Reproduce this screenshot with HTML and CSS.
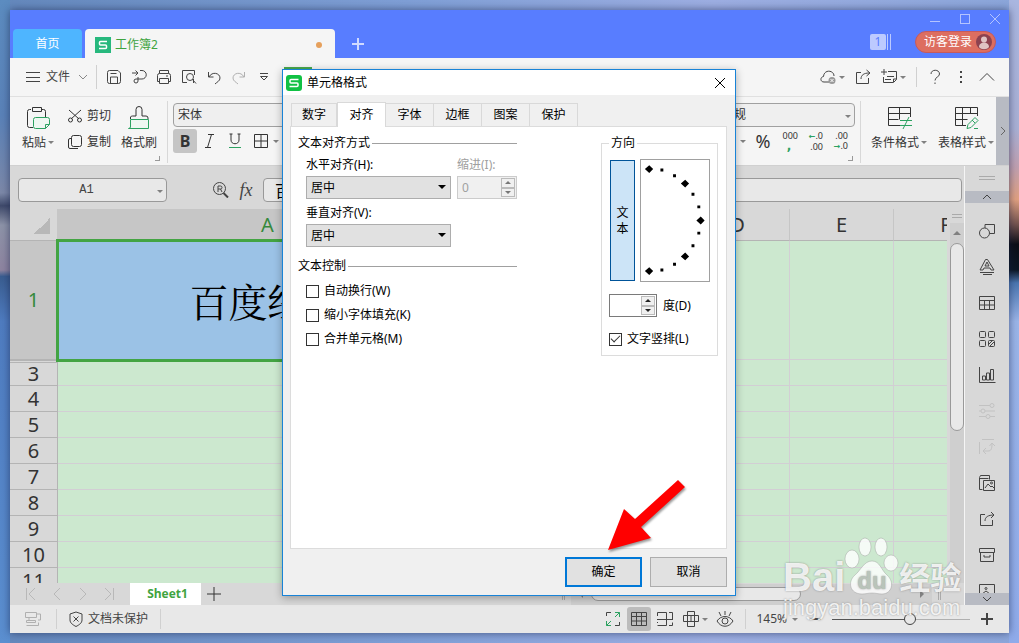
FILE: index.html
```html
<!DOCTYPE html>
<html lang="zh-CN">

<head>
    <meta charset="UTF-8">
    <meta name="viewport" content="width=device-width, initial-scale=1.0">
    <title>工作簿2</title>
    <link rel="stylesheet" href="styles.css">
</head>

<body>
    <div class="app">
        <!-- 标题栏 -->
        <header class="titlebar">
            <button class="home-tab">首页</button>
            <div class="book-tab">
                <svg class="logo" viewBox="0 0 16 16"><rect width="16" height="16" fill="#27b87d"/><path d="M12 4.500H5.500a1 1 0 0 0-1 1V7a1 1 0 0 0 1 1h5a1 1 0 0 1 1 1v1.500a1 1 0 0 1-1 1H4" stroke="#fff" stroke-width="1.500"/></svg>
                <span class="book-name">工作簿2</span>
                <span class="unsaved"></span>
            </div>
            <button class="new-tab" aria-label="新建"><svg viewBox="0 0 12 12"><path d="M6 0v12M0 6h12" stroke-width="2"/></svg></button>
            <div class="title-right">
                <div class="window-buttons">
                    <button aria-label="最小化"><svg viewBox="0 0 12 12"><path d="M1 8.500h10"/></svg></button>
                    <button aria-label="最大化"><svg viewBox="0 0 12 12"><rect x="1.500" y="1.500" width="9" height="9"/></svg></button>
                    <button aria-label="关闭"><svg viewBox="0 0 12 12"><path d="M1 1l10 10M11 1L1 11"/></svg></button>
                </div>
                <div class="account">
                    <span class="badge">1</span>
                    <span class="badge-lines"></span>
                    <button class="login">访客登录
                        <svg viewBox="0 0 16 16"><circle cx="8" cy="8" r="8" fill="#8d4250"/><circle cx="8" cy="5.500" r="3" fill="#e0c4c4"/><path d="M3 13c0-6 10-6 10 0c-2 3-8 3-10 0z" fill="#e0c4c4"/></svg>
                    </button>
                </div>
            </div>
        </header>

        <!-- 菜单栏 -->
        <nav class="menubar">
            <button class="file-menu">
                <svg class="i16" viewBox="0 0 16 16"><path d="M1 3.500h14M1 8.500h14M1 12.500h14"/></svg>
                文件
                <svg class="i10" viewBox="0 0 10 10"><path d="M1 3l4 4 4-4"/></svg>
            </button>
            <span class="line"></span>
            <div class="quick">
                <button aria-label="保存"><svg class="i16" viewBox="0 0 16 16"><path d="M1.500 3.500a2 2 0 0 1 2-2H12l2.500 2.500v8.500a2 2 0 0 1-2 2h-9a2 2 0 0 1-2-2zM4.500 14.500V8h7v6.500M4.500 4.500h6"/></svg></button>
                <button aria-label="输出"><svg class="i16" viewBox="0 0 16 16"><path d="M1 4h5.500M4.500 1.500L7 4 4.500 6.500M9 1.500h2a4 4 0 0 1 0 8.500H5a2 2 0 1 0 2 2V8"/></svg></button>
                <button aria-label="打印"><svg class="i16" viewBox="0 0 16 16"><path d="M3.500 4.500v-3h9v3M3.500 12.500h-2v-6a2 2 0 0 1 2-2h9a2 2 0 0 1 2 2v6h-2M3.500 9.500h9v5h-9zM10 7h2"/></svg></button>
                <button aria-label="打印预览"><svg class="i16" viewBox="0 0 16 16"><path d="M6 13.500H1.500v-12h12V6"/><circle cx="9" cy="8" r="3.500"/><path d="M11.500 10.500l3.500 4M12.500 10v4"/></svg></button>
                <button aria-label="撤销"><svg class="i16" viewBox="0 0 16 16"><path d="M2.500 3v5h5M3 8c3-6 11-4 11 1 0 3-3 4-5 6"/></svg></button>
                <button aria-label="恢复" class="off"><svg class="i16" viewBox="0 0 16 16"><path d="M13.500 3v5h-5M13 8C10 2 2 4 2 9c0 3 3 4 5 6"/></svg></button>
                <button aria-label="更多"><svg class="i10" viewBox="0 0 10 10"><path d="M1 1.500h8M1.500 4.500L5 8l3.500-3.500z"/></svg></button>
            </div>
            <span class="ribbon-tab"></span>
            <div class="menu-right">
                <button aria-label="云同步"><svg class="i16" viewBox="0 0 16 16"><path d="M9 13H4C0 13 0 8 3.500 7.500 4 0 14 1 14 7"/><circle cx="12" cy="11.500" r="3.500" fill="#999" stroke="none"/><path d="M10.500 10l3 3M13.500 10l-3 3" stroke="#fff"/></svg><i class="caret"></i></button>
                <button aria-label="分享"><svg class="i16" viewBox="0 0 16 16"><path d="M6 3.500H1.500v11h12V9M6 10c0-4 3-6 8-6M11.500 1L15 4l-3.500 3"/></svg></button>
                <button aria-label="批注"><svg class="i16" viewBox="0 0 16 16"><path d="M7 2.500h8.500v8l-3 3h-10V8M12.500 13v-3h3M6 7.500h7M4 10.500h6M3 0v6M0 3h6"/></svg><i class="caret"></i></button>
                <span class="line short"></span>
                <button aria-label="帮助"><svg class="i16" viewBox="0 0 16 16"><path d="M4 5c0-5 8.500-5 8.500 0C12.500 8 8 8 8 11.500M8 13.500v1.500"/></svg></button>
                <button aria-label="选项"><svg class="i16" viewBox="0 0 16 16"><path d="M8 2v2M8 7v2M8 12v2" stroke-width="2"/></svg></button>
                <button aria-label="收起"><svg class="i16" viewBox="0 0 16 16"><path d="M1 11.500l7-7 7 7"/></svg></button>
            </div>
        </nav>

        <!-- 功能区 -->
        <section class="ribbon">
            <div class="group clipboard">
                <button class="tool">
                    <svg class="i24" viewBox="0 0 24 24"><path d="M5 3.500H3.500a2 2 0 0 0-2 2v14a2 2 0 0 0 2 2H7M15 3.500h2.500a2 2 0 0 1 2 2V11M6.500 1.500h9v4h-9z"/><path d="M7.500 13.500a2 2 0 0 1 2-2h12a2 2 0 0 1 2 2v5l-4 4h-10a2 2 0 0 1-2-2zM19.500 22.500v-4h4" stroke="#2ca261" fill="#eef7f1"/></svg>
                    <span>粘贴<i class="caret"></i></span>
                </button>
                <div class="pair">
                    <button><svg class="i16" viewBox="0 0 16 16"><path d="M2 2l10 9M14 2L4 11"/><circle cx="3.500" cy="12" r="2"/><circle cx="12.500" cy="12" r="2"/></svg>剪切</button>
                    <button><svg class="i16" viewBox="0 0 16 16"><rect x="4.500" y="1.500" width="10" height="11" rx="2"/><path d="M4.500 4.500H3a1.500 1.500 0 0 0-1.500 1.500v7A1.500 1.500 0 0 0 3 14.500h8"/></svg>复制</button>
                </div>
                <button class="tool">
                    <svg class="i24" viewBox="0 0 24 24"><path d="M3.500 13v-2a2 2 0 0 1 2-1H9V3.500a3 3 0 0 1 6 0V10h4a2 2 0 0 1 2 2v1"/><path d="M3.500 13.500h18v9H1.500l2-1z" stroke="#2ca261" fill="#eef7f1"/></svg>
                    <span>格式刷</span>
                </button>
                <i class="corner"></i>
            </div>
            <div class="group font-group">
                <select class="ribbon-select" aria-label="字体"><option>宋体</option></select>
                <div class="row">
                    <button class="fmt active bold">B</button>
                    <button class="fmt" aria-label="倾斜"><svg class="i16" viewBox="0 0 16 16"><path d="M6 1.500h6M3 14.500h6M9.500 1.500l-4 13"/></svg></button>
                    <button class="fmt" aria-label="下划线"><svg class="i16" viewBox="0 0 16 16"><path d="M4 1v6c0 5 8 5 8 0V1M2.500 1h3M10.500 1h3"/><path d="M2 14.500h12" stroke="#2ca261"/></svg></button>
                    <button class="fmt wide" aria-label="边框"><svg class="i16" viewBox="0 0 16 16"><path d="M1.500 1.500h13v13h-13zM8 1.500v13M1.500 8h13"/></svg><i class="caret"></i></button>
                </div>
            </div>
            <div class="group number-group">
                <div class="combo"><select class="ribbon-select" aria-label="数字格式"><option>常规</option></select></div>
                <div class="row">
                    <i class="caret"></i>
                    <button class="percent">%</button>
                    <button class="stack"><span>000</span><b class="comma">,</b></button>
                    <button class="stack"><span><b>←</b>.0</span><span>.00</span></button>
                    <button class="stack"><span>.00</span><span><b>→</b>.0</span></button>
                </div>
                <i class="corner"></i>
            </div>
            <div class="group style-group">
                <button class="tool">
                    <svg class="i24" viewBox="0 0 24 24"><path d="M14 19.500H1.500v-18h22V11M1.500 7.500h22M1.500 13.500h10M12.500 1.500v12"/><path d="M13 14.500h12M13 19.500h12M22 11l-6 12" stroke="#2ca261"/></svg>
                    <span>条件格式<i class="caret"></i></span>
                </button>
                <button class="tool">
                    <svg class="i24" viewBox="0 0 24 24"><path d="M12 19.500H1.500v-18h22V10M1.500 7.500h22M1.500 13.500h12M8.500 1.500v18M16.500 1.500v6"/><path d="M13 22.500l1-4 7-7 3 3-7 7zM20 22.500h4M18 14l3 3" stroke="#2ca261"/></svg>
                    <span>表格样式<i class="caret"></i></span>
                </button>
            </div>
            <button class="ribbon-more" aria-label="更多工具"><svg class="i10" viewBox="0 0 10 10"><path d="M3 1l4 4-4 4"/></svg></button>
        </section>

        <div class="workspace">
            <main class="main">
                <div class="formula-bar">
                    <div class="combo name-box"><input type="text" value="A1" aria-label="名称框"><i class="caret"></i></div>
                    <button class="find" aria-label="查找"><svg class="i16" viewBox="0 0 16 16"><circle cx="6.500" cy="6.500" r="6"/><path d="M10.500 11l4.500 4.500"  stroke-width="2"/><path d="M5 10V4h2.500a1.500 1.500 0 0 1 0 3H5M7.500 7L9 10"/></svg></button>
                    <button class="fx">fx</button>
                    <input class="formula" type="text" value="百度经验" aria-label="编辑栏">
                </div>

                <div class="sheet">
                    <div class="cells">
                        <table>
                            <colgroup>
                                <col class="col-num"><col class="col-a"><col><col><col><col><col>
                            </colgroup>
                            <thead>
                                <tr><th class="all"></th><th class="current">A</th><th>B</th><th>C</th><th>D</th><th>E</th><th>F</th></tr>
                            </thead>
                            <tbody>
                                <tr class="tall"><th class="current">1</th><td class="selected">百度经验</td><td></td><td></td><td></td><td></td><td></td></tr>
                                <tr><th class="after-hidden">3</th><td></td><td></td><td></td><td></td><td></td><td></td></tr>
                                <tr><th>4</th><td></td><td></td><td></td><td></td><td></td><td></td></tr>
                                <tr><th>5</th><td></td><td></td><td></td><td></td><td></td><td></td></tr>
                                <tr><th>6</th><td></td><td></td><td></td><td></td><td></td><td></td></tr>
                                <tr><th>7</th><td></td><td></td><td></td><td></td><td></td><td></td></tr>
                                <tr><th>8</th><td></td><td></td><td></td><td></td><td></td><td></td></tr>
                                <tr><th>9</th><td></td><td></td><td></td><td></td><td></td><td></td></tr>
                                <tr><th>10</th><td></td><td></td><td></td><td></td><td></td><td></td></tr>
                                <tr><th>11</th><td></td><td></td><td></td><td></td><td></td><td></td></tr>
                            </tbody>
                        </table>
                    </div>
                    <div class="vscroll">
                        <span class="grip"></span>
                        <div class="vtrack">
                            <i class="caret up"></i>
                            <span class="vthumb"></span>
                            <i class="caret"></i>
                        </div>
                    </div>
                </div>

                <div class="sheet-tabs">
                    <div class="sheet-nav">
                        <button aria-label="第一张"><svg class="i14" viewBox="0 0 14 14"><path d="M2.500 1v12M11 1L5 7l6 6"/></svg></button>
                        <button aria-label="上一张"><svg class="i14" viewBox="0 0 14 14"><path d="M10 1L4 7l6 6"/></svg></button>
                        <button aria-label="下一张"><svg class="i14" viewBox="0 0 14 14"><path d="M4 1l6 6-6 6"/></svg></button>
                        <button aria-label="最后一张"><svg class="i14" viewBox="0 0 14 14"><path d="M3 1l6 6-6 6M11.500 1v12"/></svg></button>
                    </div>
                    <button class="sheet-tab">Sheet1</button>
                    <button class="add-sheet" aria-label="新建工作表"><svg class="i14" viewBox="0 0 14 14"><path d="M7 0v14M0 7h14"/></svg></button>
                    <div class="hscroll">
                        <span class="split"></span>
                        <div class="htrack"><i class="caret to-left"></i><span class="hthumb"></span><i class="caret to-right"></i></div>
                        <span class="split"></span>
                    </div>
                </div>
            </main>

            <aside class="side">
                <span class="side-grip"></span>
                <button class="side-scroll" aria-label="向上"><svg class="i10" viewBox="0 0 10 10"><path d="M1 7l4-4 4 4"/></svg></button>
                <div class="side-tools">
                    <button aria-label="形状"><svg class="i18" viewBox="0 0 18 18"><path d="M7 6V2.500h9.500v9H12"/><circle cx="6.500" cy="11" r="5"/></svg></button>
                    <button aria-label="艺术字"><svg class="i18" viewBox="0 0 18 18"><path d="M2 12L7.500 1.500h2L16 12h-3l-1-2H6l-1 2zM7 8l2-4 2 4zM2 14.500h14M5 16.500h9"/></svg></button>
                    <button aria-label="表格"><svg class="i18" viewBox="0 0 18 18"><path d="M1.500 2.500h15v13h-15zM1.500 6.500h15M1.500 11h15M6.500 6.500v9M11.500 6.500v9"/></svg></button>
                    <button aria-label="应用"><svg class="i18" viewBox="0 0 18 18"><rect x="1.500" y="1.500" width="6" height="6" rx="1"/><rect x="10.500" y="1.500" width="6" height="6" rx="1"/><rect x="1.500" y="10.500" width="6" height="6" rx="1"/><rect x="10.500" y="10.500" width="6" height="6" rx="1"/><path d="M11 14l3-3M12 16l4-4"/></svg></button>
                    <button aria-label="图表"><svg class="i18" viewBox="0 0 18 18"><path d="M1.500 1v15.500h16M4.500 14v-4h3v4zM8.500 14V7h3v7zM12.500 14V3.500h3V14z"/></svg></button>
                    <button class="off" aria-label="设置"><svg class="i18" viewBox="0 0 18 18"><path d="M1 3.500h11M1 9h2M7 9h10M1 14.500h7M12 14.500h5"/><circle cx="14" cy="3.500" r="2"/><circle cx="5" cy="9" r="2"/><circle cx="10" cy="14.500" r="2"/></svg></button>
                    <button class="off" aria-label="转换"><svg class="i18" viewBox="0 0 18 18"><path d="M1.500 4v12M4 1.500h12M5 13h5c3 0 4-2 4-7M11.500 8L14 5l3 3M8 10l-3 3 3 3"/></svg></button>
                    <button aria-label="图库"><svg class="i18" viewBox="0 0 18 18"><path d="M4.500 15.500h-3v-12l1-2h9v4M1.500 4.500h9M5.500 6.500h11v10h-11zM7 14l3-4 3 3 1-1 2 2"/><circle cx="13.500" cy="9" r="1"/></svg></button>
                    <button aria-label="分享"><svg class="i18" viewBox="0 0 18 18"><path d="M7 4.500H2.500v11h12V10M7 11c0-4 3-6 9-6M13 2l3 3-3 3"/></svg></button>
                    <button aria-label="归档"><svg class="i18" viewBox="0 0 18 18"><path d="M1.500 2.500h15v4h-15zM2.500 6.500v9h13v-9M6 9v2h6V9"/></svg></button>
                    <button aria-label="图片"><svg class="i18" viewBox="0 0 18 18"><path d="M1.500 2.500h15v13h-15zM4 12l4-3 4 3"/><circle cx="8" cy="6.500" r="1"/></svg></button>
                </div>
                <button class="side-scroll" aria-label="向下"><svg class="i10" viewBox="0 0 10 10"><path d="M1 3l4 4 4-4"/></svg></button>
            </aside>
        </div>

        <!-- 状态栏 -->
        <footer class="statusbar">
            <button class="dock off" aria-label="设备"><svg class="i18" viewBox="0 0 18 18"><path d="M1.500 2.500h11v5h-11zM12 4h4.500v6H14M5 7.500v3M2.500 10.500h9v2h-9zM2.500 15.500h12v-3"/></svg></button>
            <span class="line short"></span>
            <button class="protect"><svg class="i16" viewBox="0 0 16 16"><path d="M8 1l6 2v6c0 3-3 5-6 6.500C5 14 2 12 2 9V3zM5.500 5.500l5 5M10.500 5.500l-5 5"/></svg>文档未保护</button>
            <span class="line short"></span>
            <div class="views">
                <button aria-label="全屏"><svg class="i16" viewBox="0 0 16 16"><path d="M1.500 5V1.500H6M10 14.500h4.500V11"/><path d="M10 1.500h4.500V6M14.500 1.500L10 6M1.500 10v4.500H6M1.500 14.500L6 10" stroke="#2ca261"/></svg></button>
                <button class="active" aria-label="普通视图"><svg class="i18" viewBox="0 0 18 18"><path d="M1.500 2.500h15v13h-15zM1.500 6.500h15M1.500 11h15M6.500 2.500v13M11.500 2.500v13"/></svg></button>
                <button aria-label="分页预览"><svg class="i18" viewBox="0 0 18 18"><path d="M1.500 6V2.500h9v6.500M1 9.500h16M1.500 15.500h9v-6M13 2.500h3.500v7M13 15.500h3.500v-3M1.500 12v1"/></svg></button>
                <button class="has-caret" aria-label="阅读模式"><svg class="i18" viewBox="0 0 18 18"><path d="M5.500 1.500h7v15h-7zM1.500 5.500h15v6h-15zM9 5.500v6"/></svg><i class="caret"></i></button>
                <button aria-label="护眼模式"><svg class="i18" viewBox="0 0 18 18"><path d="M1 11c4-6 12-6 16 0-4 7-12 7-16 0zM9 1v4M3 2l2 4M15 2l-2 4"/><circle cx="9" cy="11" r="3"/></svg></button>
            </div>
            <span class="line short"></span>
            <button class="zoom-value">145%<i class="caret"></i></button>
            <div class="zoom">
                <button aria-label="缩小"><svg class="i14" viewBox="0 0 14 14"><path d="M1 7h12" stroke-width="2"/></svg></button>
                <input type="range" min="0" max="100" value="57" aria-label="缩放">
                <button aria-label="放大"><svg class="i14" viewBox="0 0 14 14"><path d="M7 1v12M1 7h12" stroke-width="2"/></svg></button>
            </div>
        </footer>
    </div>

    <!-- 单元格格式对话框 -->
    <div class="dialog" role="dialog" aria-labelledby="dialogTitle">
        <div class="dialog-title">
            <svg class="logo" viewBox="0 0 16 16"><rect width="16" height="16" rx="3" fill="#11c144"/><path d="M12.500 4.500H5A1 1 0 0 0 4 5.500V7a1 1 0 0 0 1 1h6a1 1 0 0 1 1 1v1.500a1 1 0 0 1-1 1H3.500" stroke="#fff" stroke-width="1.500"/></svg>
            <span id="dialogTitle">单元格格式</span>
            <button class="close" aria-label="关闭"><svg viewBox="0 0 12 12"><path d="M1 1l10 10M11 1L1 11"/></svg></button>
        </div>
        <div class="dialog-body">
            <div class="tabs">
                <button>数字</button>
                <button class="on">对齐</button>
                <button>字体</button>
                <button>边框</button>
                <button>图案</button>
                <button>保护</button>
            </div>
            <div class="panel">
                <div class="align-pane">
                    <h3>文本对齐方式</h3>
                    <div class="fields">
                        <div class="field">
                            <label for="halign">水平对齐(H):</label>
                            <div class="combo"><select id="halign"><option>居中</option></select></div>
                        </div>
                        <div class="field disabled">
                            <label for="indent">缩进(I):</label>
                            <div class="spin"><input id="indent" type="text" value="0" disabled><span class="arrows"><button disabled aria-label="增加"></button><button disabled aria-label="减少"></button></span></div>
                        </div>
                        <div class="field">
                            <label for="valign">垂直对齐(V):</label>
                            <div class="combo"><select id="valign"><option>居中</option></select></div>
                        </div>
                    </div>
                    <h3>文本控制</h3>
                    <div class="checks">
                        <label><input type="checkbox">自动换行(W)</label>
                        <label><input type="checkbox">缩小字体填充(K)</label>
                        <label><input type="checkbox">合并单元格(M)</label>
                    </div>
                </div>
                <fieldset class="direction">
                    <legend>方向</legend>
                    <div class="dials">
                        <button class="vertical">文<br>本</button>
                        <svg class="dial" viewBox="0 0 70 123">
                            <path d="M4 8.500l4.500-4 4 4-4 4zM41 23.500l4.500-4 4 4-4 4zM57 61.500l4.500-4 4 4-4 4zM41 98.500l4.500-4 4 4-4 4zM4 113.500l4.500-4 4 4-4 4z"/>
                            <path d="M20 8h3v3h-3zM33 14h3v3h-3zM52 33h3v3h-3zM58 46h3v3h-3zM58 73h3v3h-3zM52 86h3v3h-3zM33 105h3v3h-3zM20 111h3v3h-3z"/>
                        </svg>
                    </div>
                    <div class="degree">
                        <div class="spin"><input id="degree" type="text"><span class="arrows"><button aria-label="增加"></button><button aria-label="减少"></button></span></div>
                        <label for="degree">度(D)</label>
                    </div>
                    <div class="checks"><label><input type="checkbox" checked>文字竖排(L)</label></div>
                </fieldset>
            </div>
            <div class="actions">
                <button class="ok">确定</button>
                <button>取消</button>
            </div>
        </div>
        <svg class="pointer" viewBox="0 0 80 74"><path d="M71 2l7 7-44 40 10 11L1 72 17 31l11 10z"/></svg>
    </div>

    <div class="watermark">
        <div class="brand">
            <span class="bai">Bai</span>
            <svg viewBox="0 0 54 58"><ellipse cx="7" cy="22" rx="7" ry="9"/><ellipse cx="20" cy="10" rx="6" ry="9"/><ellipse cx="36" cy="10" rx="6" ry="9"/><ellipse cx="46" cy="26" rx="7" ry="8"/><path d="M27 24c8 0 9 9 15 14 8 7 5 19-5 19-4 0-6-1-10-1s-6 1-10 1c-12 0-15-12-7-19 6-5 9-14 17-14z"/><text x="27" y="52" text-anchor="middle">du</text></svg>
            <span class="jy">经验</span>
        </div>
        <div class="url">jingyan.baidu.com</div>
    </div>
</body>

</html>
```

FILE: styles.css
```css
* {
    box-sizing: border-box;
}

body {
    margin: 0;
    padding: 10px;
    height: 100vh;
    overflow: hidden;
    position: relative;
    font-family: "Noto Sans", "Noto Sans CJK SC", sans-serif;
    font-size: 12px;
    line-height: 16px;
    color: #333;
    background:
        linear-gradient(to bottom, #5c8cc0, #5a82b8 18%, #7c88a8 30%, #3f4a6b 32%, #8d93a8 35%, #8e84a0 42%, #3a5d90 43%, #4f7cc0 50%, #5b8fd0) left / 10px 100% no-repeat,
        linear-gradient(to bottom, #a9b6e0, #a9b0d4 20%, #c0a0b0 26%, #e0a080 31%, #70504c 35%, #0c0e16 38%, #0c1826 42%, #4b76b0 44%, #9bb5e8 50%, #8fabea) right / 10px 100% no-repeat,
        linear-gradient(to right, #6488bc, #7f9fd6 40%, #9daee2 70%, #8ba6da);
}

button,
input,
select {
    font: inherit;
    color: inherit;
    margin: 0;
    padding: 0;
    border: none;
    background: none;
    border-radius: 0;
    appearance: none;
    outline: none;
}

svg {
    display: block;
    flex: none;
    fill: none;
    stroke: currentColor;
}

.logo {
    width: 16px;
    height: 16px;
}

.logo rect {
    stroke: none;
}

.i10 {
    width: 10px;
    height: 10px;
}

.i14 {
    width: 14px;
    height: 14px;
}

.i16 {
    width: 16px;
    height: 16px;
}

.i18 {
    width: 18px;
    height: 18px;
}

.i24 {
    width: 24px;
    height: 24px;
    overflow: visible;
}

.off {
    color: #b0b0b0;
}

.line {
    width: 1px;
    height: 24px;
    background: #d0d0d0;
}

.line.short {
    height: 20px;
}

.caret {
    display: inline-block;
    flex: none;
    border: 3px solid transparent;
    border-top-color: #808080;
    border-bottom: none;
}

.caret.up {
    border: 4px solid transparent;
    border-bottom-color: #808080;
    border-top: none;
}

.caret.to-left,
.caret.to-right {
    border: 4px solid transparent;
    border-right: none;
    border-left-color: #808080;
}

.caret.to-left {
    transform: rotate(180deg);
}

.app {
    height: 100%;
    display: flex;
    flex-direction: column;
    box-shadow: 0 0 8px rgba(20, 30, 70, 0.6);
    background: #f5f5f5;
}

/* 标题栏 */
.titlebar {
    flex: none;
    height: 48px;
    display: flex;
    align-items: flex-end;
    padding-left: 3px;
    background: #587dff;
    color: #fff;
}

.home-tab {
    width: 69px;
    height: 29px;
    margin-right: 3px;
    border-radius: 4px 4px 0 0;
    background: #4eb5ff;
}

.book-tab {
    width: 250px;
    height: 29px;
    display: flex;
    align-items: center;
    gap: 4px;
    padding: 2px 13px 0 10px;
    border-radius: 4px 4px 0 0;
    background: #f5f5f5;
    color: #3fa43f;
}

.book-name {
    flex: 1;
}

.unsaved {
    width: 6px;
    height: 6px;
    border-radius: 50%;
    background: #e6a05c;
}

.new-tab {
    padding: 8px 17px;
    color: #d0daff;
}

.new-tab svg {
    width: 12px;
    height: 12px;
}

.title-right {
    align-self: stretch;
    margin-left: auto;
    display: flex;
    flex-direction: column;
    align-items: flex-end;
    gap: 6px;
    padding: 3px 8px 0 0;
}

.window-buttons {
    display: flex;
    gap: 18px;
    color: #b4c4ff;
}

.window-buttons svg {
    width: 12px;
    height: 12px;
}

.account {
    display: flex;
    align-items: center;
    padding-right: 5px;
}

.badge {
    width: 16px;
    height: 16px;
    border-radius: 2px;
    text-align: center;
    background: #bccaff;
    color: #587dff;
}

.badge-lines {
    width: 4px;
    height: 16px;
    margin: 0 24px 0 1px;
    border: 1px solid #bccaff;
    border-width: 0 1px;
}

.login {
    height: 22px;
    display: flex;
    align-items: center;
    gap: 4px;
    padding: 0 3px 0 8px;
    border: 1px solid #c65a5c;
    border-radius: 11px;
    background: #dd6e60;
}

.login svg {
    width: 16px;
    height: 16px;
    stroke: none;
}

/* 菜单栏 */
.menubar {
    flex: none;
    height: 39px;
    display: flex;
    align-items: center;
    padding: 0 14px 0 15px;
    border-bottom: 1px solid #e0e0e0;
    color: #444;
}

.file-menu {
    display: flex;
    align-items: center;
    gap: 5px;
    margin-right: 8px;
}

.file-menu .i10 {
    margin-left: 3px;
    color: #888;
}

.quick {
    display: flex;
    gap: 9px;
    margin-left: 9px;
}

.quick button {
    width: 16px;
    height: 16px;
    display: grid;
    place-items: center;
}

/* 当前选项卡的绿色标记 */
.ribbon-tab {
    align-self: flex-start;
    width: 28px;
    height: 3px;
    margin: 9px 0 0 12px;
    background: #4aa84e;
}

.menu-right {
    margin-left: auto;
    display: flex;
    align-items: center;
    gap: 10px;
}

.menu-right button {
    display: flex;
    align-items: center;
    gap: 3px;
}

/* 功能区 */
.ribbon {
    flex: none;
    height: 69px;
    display: flex;
    border-bottom: 1px solid #d0d0d0;
}

.group {
    display: flex;
    position: relative;
    margin: 4px 0 2px;
    border-right: 1px solid #d8d8d8;
}

.corner {
    position: absolute;
    right: 7px;
    bottom: 2px;
    width: 5px;
    height: 5px;
    border: 1px solid #999;
    border-width: 0 1px 1px 0;
}

.tool {
    display: flex;
    flex-direction: column;
    align-items: center;
    gap: 5px;
    padding-top: 5px;
    white-space: nowrap;
}

.tool .caret {
    margin: 0 0 3px 2px;
}

.clipboard {
    padding: 0 10px 0 12px;
    gap: 10px;
}

.pair {
    display: flex;
    flex-direction: column;
    gap: 10px;
    margin-left: 3px;
    padding-top: 7px;
}

.pair button {
    display: flex;
    align-items: center;
    gap: 4px;
}

.font-group {
    flex: 1;
    flex-direction: column;
    border: none;
    padding: 2px 5px 0;
    gap: 2px;
}

.ribbon-select {
    width: 138px;
    height: 24px;
    padding-left: 4px;
    border: 1px solid #a0a0a0;
    border-radius: 4px;
    background: #efefef;
}

.row {
    display: flex;
    align-items: center;
    gap: 1px;
    height: 24px;
}

.fmt {
    width: 24px;
    height: 24px;
    display: flex;
    align-items: center;
    justify-content: center;
    gap: 4px;
    border-radius: 3px;
}

.fmt.active {
    background: #c5c5c5;
}

.fmt.wide {
    width: 36px;
}

.bold {
    font-size: 16px;
    font-weight: bold;
}

.number-group {
    flex-direction: column;
    gap: 2px;
    padding: 2px 5px 0 0;
}

.number-group .row {
    justify-content: flex-end;
    padding-right: 7px;
    gap: 7px;
}

.percent {
    width: 20px;
    font-size: 18px;
}

.stack {
    width: 18px;
    display: flex;
    flex-direction: column;
    align-items: flex-end;
    font-size: 9px;
    line-height: 10px;
    white-space: nowrap;
}

.stack b {
    color: #2ca261;
    font-family: "DejaVu Sans", sans-serif;
    font-size: 8px;
}

.stack .comma {
    align-self: center;
    font-size: 12px;
}

.style-group {
    gap: 11px;
    padding-left: 10px;
    border: none;
}

.ribbon-more {
    width: 13px;
    margin-left: 2px;
    display: grid;
    place-items: center;
    background: #b8bbc3;
    color: #666;
}

/* 工作区 */
.workspace {
    flex: 1;
    min-height: 0;
    display: flex;
    background: #d8d8d8;
}

.main {
    flex: 1;
    min-width: 0;
    display: flex;
    flex-direction: column;
}

.formula-bar {
    flex: none;
    height: 43px;
    display: flex;
    align-items: center;
    padding: 4px 2px 0 8px;
    color: #444;
}

.formula-bar input {
    height: 24px;
    border: 1px solid #999;
    border-radius: 4px;
    background: #e8e8e8;
}

.combo {
    display: flex;
    position: relative;
}

.combo select {
    flex: 1;
}

.combo:has(select)::after,
.name-box .caret {
    content: "";
    position: absolute;
    right: 4px;
    top: 50%;
    pointer-events: none;
    border: 3px solid transparent;
    border-top-color: #808080;
    border-bottom: none;
}

.name-box input {
    width: 149px;
    padding-right: 12px;
    text-align: center;
    font-family: "Liberation Mono", monospace;
}

.find {
    margin-left: 46px;
}

.fx {
    width: 34px;
    font-family: "Liberation Serif", serif;
    font-style: italic;
    font-size: 18px;
}

.formula {
    flex: 1;
    min-width: 0;
    padding-left: 11px;
    font-size: 16px;
    color: #000;
}

.sheet {
    flex: 1;
    min-height: 0;
    display: flex;
}

.cells {
    flex: 1;
    min-width: 0;
    overflow: hidden;
    background: #cce8cf;
}

.cells table {
    width: 988px;
    table-layout: fixed;
    border-spacing: 0;
}

.cells col {
    width: 104px;
}

.cells .col-num {
    width: 48px;
}

.cells .col-a {
    width: 420px;
}

.cells th,
.cells td {
    height: 26px;
    padding: 0;
    border: 1px solid #d2ced4;
    border-width: 0 1px 1px 0;
    line-height: 24px;
}

.cells th {
    background: #d8d8d8;
    border-color: #b4b4b4;
    font-size: 20px;
    font-weight: normal;
}

.cells thead th {
    height: 32px;
    border-right-color: #c6c6c6;
}

.cells .tall th,
.cells .tall td {
    height: 119px;
}

.cells th.current {
    background: #c6c6c6;
    color: #35893c;
}

.cells .after-hidden {
    border-top: 3px double #b4b4b4;
    line-height: 22px;
}

.cells .all {
    background: linear-gradient(135deg, transparent 50%, #b8b8b8 50%) 24px 9px / 16px 16px no-repeat #d8d8d8;
}

.cells .selected {
    position: relative;
    outline: 3px solid #43a443;
    outline-offset: -1px;
    background: #9bc2e6;
    color: #000;
    text-align: center;
    font-family: "Noto Serif CJK SC", "Noto Sans CJK SC", serif;
    font-size: 39px;
    line-height: 48px;
}

.vscroll {
    width: 17px;
    display: flex;
    flex-direction: column;
    align-items: flex-end;
    gap: 5px;
    padding: 5px 0 0;
}

.grip,
.side-grip {
    width: 10px;
    height: 4px;
    margin-right: 2px;
    border: 1px solid #aaa;
    border-width: 1px 0;
}

.vtrack {
    flex: 1;
    width: 14px;
    display: flex;
    flex-direction: column;
    align-items: center;
    padding: 8px 0;
    background: #cfcfcf;
}

.vthumb {
    width: 14px;
    height: 188px;
    margin: 8px 0 auto;
    border: 1px solid #999;
    border-radius: 7px;
    background: #e8e8e8;
}

.sheet-tabs {
    flex: none;
    height: 22px;
    display: flex;
    align-items: stretch;
}

.sheet-nav {
    width: 120px;
    display: flex;
    align-items: center;
    gap: 12px;
    padding-left: 14px;
    color: #b8b8b8;
}

.sheet-tab {
    width: 71px;
    background: #fff;
    color: #3fa43f;
    font-family: "Open Sans", sans-serif;
    font-weight: bold;
    padding-left: 4px;
}

.add-sheet {
    padding: 0 6px;
}

.hscroll {
    margin-left: auto;
    width: 402px;
    display: flex;
    align-items: center;
    gap: 6px;
    padding-right: 23px;
}

.split {
    width: 3px;
    height: 12px;
    border: 1px solid #aaa;
    border-width: 0 1px;
}

.htrack {
    flex: 1;
    display: flex;
    align-items: center;
    padding: 3px 8px 4px;
    background: #cfcfcf;
}

.hthumb {
    width: 210px;
    height: 14px;
    margin: 0 auto 0 8px;
    border: 1px solid #999;
    border-radius: 7px;
    background: #e8e8e8;
}

/* 右侧工具栏 */
.side {
    width: 45px;
    display: flex;
    flex-direction: column;
    border-left: 1px solid #f5f5f5;
    color: #444;
}

.side-grip {
    flex: none;
    width: 16px;
    margin: 10px auto 11px;
}

.side-scroll {
    flex: none;
    height: 12px;
    display: grid;
    place-items: center;
    background: #b8bbc3;
}

.side-tools {
    flex: 1;
    min-height: 0;
    overflow: hidden;
    display: flex;
    flex-direction: column;
    padding-top: 10px;
}

.side-tools button {
    flex: none;
    height: 36px;
    display: grid;
    place-items: center;
}

.side-tools .off {
    color: #c2c2c2;
}

/* 状态栏 */
.statusbar {
    flex: none;
    height: 28px;
    display: flex;
    align-items: center;
    background: #e8e8e8;
    color: #444;
}

.dock {
    padding: 0 14px;
}

.protect {
    display: flex;
    align-items: center;
    gap: 4px;
    padding: 0 12px 0 11px;
}

.views {
    margin-left: auto;
    display: flex;
    gap: 2px;
    padding-right: 8px;
}

.views button {
    width: 24px;
    height: 24px;
    display: flex;
    align-items: center;
    justify-content: center;
    gap: 2px;
    border-radius: 3px;
}

.views .active {
    background: #bcbcbc;
}

.views .has-caret {
    width: 32px;
}

.zoom-value {
    display: flex;
    align-items: center;
    gap: 5px;
    padding-left: 10px;
}

.zoom {
    display: flex;
    align-items: center;
    gap: 10px;
    padding: 0 15px 0 10px;
}

.zoom input {
    width: 138px;
    height: 14px;
    background: linear-gradient(to right, #555 55%, #b0b0b0 55%) center / 100% 1px no-repeat;
}

.zoom input::-webkit-slider-thumb {
    appearance: none;
    width: 12px;
    height: 12px;
    border: 1px solid #444;
    border-radius: 50%;
    background: #e8e8e8;
}

/* 对话框 */
.dialog {
    position: absolute;
    left: 282px;
    top: 69px;
    width: 454px;
    border: 1px solid #1883d7;
    background: #f0f0f0;
    box-shadow: 0 2px 8px rgba(0, 0, 0, 0.3);
    color: #000;
}

.dialog-title {
    height: 25px;
    display: flex;
    align-items: center;
    gap: 5px;
    padding: 0 9px 0 3px;
    background: #fff;
}

.close {
    margin-left: auto;
}

.close svg {
    width: 12px;
    height: 12px;
}

.dialog-body {
    padding: 7px 8px 8px 7px;
}

.tabs {
    display: flex;
    align-items: flex-end;
    padding-left: 1px;
}

.tabs button {
    width: 48px;
    height: 23px;
    border: 1px solid #d9d9d9;
    border-width: 1px 1px 0 0;
}

.tabs button:first-child {
    width: 46px;
    border-left-width: 1px;
}

.tabs .on {
    width: 49px;
    height: 25px;
    margin-bottom: -1px;
    border-left-width: 1px;
    background: #fff;
}

.panel {
    min-height: 423px;
    display: flex;
    align-items: flex-start;
    justify-content: space-between;
    padding: 8px 8px 8px 7px;
    border: 1px solid #dcdcdc;
    background: #fff;
}

.align-pane {
    width: 219px;
}

h3 {
    display: flex;
    align-items: center;
    gap: 2px;
    margin: 0;
    font-size: 12px;
    font-weight: normal;
}

h3::after {
    content: "";
    flex: 1;
    height: 1px;
    background: #a0a0a0;
}

.fields {
    display: grid;
    grid-template-columns: 145px 60px;
    gap: 6px;
    padding: 6px 0 11px 8px;
}

.field label {
    display: block;
    margin-bottom: 3px;
}

.field select {
    height: 23px;
    padding: 0 4px;
    border: 1px solid #adadad;
    background: #e1e1e1;
}

.field .combo::after {
    right: 5px;
    top: 9px;
    border-width: 4px;
    border-bottom: none;
    border-top-color: #000;
}

.disabled {
    color: #a0a0a0;
}

.spin {
    height: 23px;
    display: flex;
    padding: 1px;
    border: 1px solid #7a7a7a;
}

.disabled .spin {
    border-color: #ccc;
    background: #f0f0f0;
}

.spin input {
    flex: 1;
    min-width: 0;
    padding-left: 3px;
}

.arrows {
    width: 14px;
    display: flex;
    flex-direction: column;
}

.arrows button {
    flex: 1;
    display: grid;
    place-items: center;
    border: 1px solid #bbb;
    background: #f0f0f0;
}

.arrows button::after {
    content: "";
    border: 3px solid transparent;
    border-top-color: #222;
    border-bottom: none;
}

.disabled .arrows button::after {
    border-top-color: #777;
}

.arrows button:first-child::after {
    transform: rotate(180deg);
}

.checks {
    display: flex;
    flex-direction: column;
    gap: 8px;
    padding: 9px 0 0 8px;
}

.checks label {
    display: flex;
    align-items: center;
    gap: 5px;
}

.checks input {
    width: 13px;
    height: 13px;
    border: 1px solid #333;
    background: #fff;
}

.checks input:checked {
    display: grid;
    place-items: center;
}

.checks input:checked::after {
    content: "";
    width: 8px;
    height: 4px;
    margin-bottom: 3px;
    border: 1px solid #333;
    border-width: 0 0 1px 1px;
    transform: rotate(-45deg);
}

.direction {
    width: 117px;
    margin: 0;
    padding: 8px 7px;
    border: 1px solid #dcdcdc;
}

.direction legend {
    padding: 0 2px;
}

.dials {
    display: flex;
    align-items: center;
    gap: 5px;
    padding-left: 1px;
}

.vertical {
    width: 25px;
    height: 121px;
    border: 1px solid #005499;
    background: #cce4f7;
}

.dial {
    width: 70px;
    height: 123px;
    border: 1px solid #a0a0a0;
    fill: #000;
    stroke: none;
}

.degree {
    display: flex;
    align-items: center;
    gap: 6px;
    margin: 12px 0 5px;
}

.degree .spin {
    width: 48px;
}

.direction .checks {
    padding-left: 0;
}

.actions {
    display: flex;
    justify-content: flex-end;
    gap: 8px;
    padding-top: 8px;
}

.actions button {
    width: 77px;
    height: 30px;
    border: 1px solid #adadad;
    background: #e1e1e1;
}

.actions .ok {
    border: 2px solid #0078d7;
}

/* 指向确定按钮的箭头 */
.pointer {
    position: absolute;
    right: 48px;
    bottom: 43px;
    width: 80px;
    height: 74px;
    fill: #ff0000;
    stroke: none;
    filter: drop-shadow(1px 2px 1px rgba(0, 0, 0, 0.4));
}

/* 水印 */
.watermark {
    position: absolute;
    right: 58px;
    bottom: 22px;
    width: 178px;
    color: rgba(255, 255, 255, 0.85);
    text-shadow: 0 0 2px rgba(120, 120, 120, 0.8);
    white-space: nowrap;
    pointer-events: none;
}

.brand {
    display: flex;
    align-items: flex-end;
    justify-content: space-between;
    font-weight: bold;
}

.bai {
    font-family: "Liberation Sans", sans-serif;
    font-size: 40px;
    line-height: 36px;
}

.brand svg {
    width: 54px;
    height: 58px;
    overflow: visible;
    fill: rgba(255, 255, 255, 0.8);
    stroke: rgba(150, 150, 150, 0.4);
}

.brand text {
    fill: #b9c4ba;
    stroke: none;
    font-family: "Liberation Sans", sans-serif;
    font-size: 24px;
}

.jy {
    font-size: 31px;
    line-height: 36px;
}

.url {
    font-family: "Liberation Sans", sans-serif;
    font-size: 22px;
    line-height: 26px;
}
```
